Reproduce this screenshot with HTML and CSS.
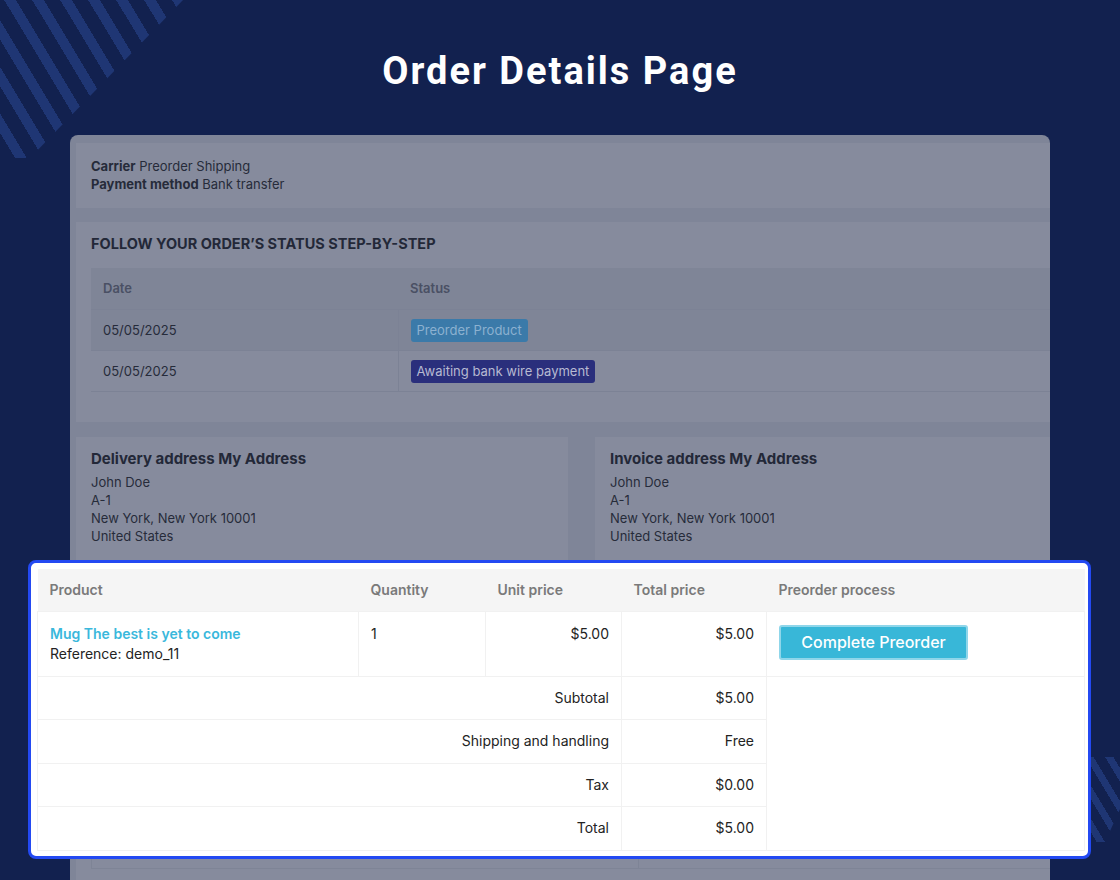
FILE: index.html
```html
<!DOCTYPE html>
<html lang="en">
<head>
<meta charset="utf-8">
<title>Order Details Page</title>
<link rel="stylesheet" href="styles.css">
</head>
<body>
<div class="deco deco-tl"></div>
<div class="deco deco-br"></div>

<h1 class="title">Order Details Page</h1>

<div class="panel">
  <div class="page">
    <section class="card info">
      <div><strong>Carrier</strong> Preorder Shipping</div>
      <div><strong>Payment method</strong> Bank transfer</div>
    </section>

    <section class="card status">
      <h3 class="status-title">FOLLOW YOUR ORDER’S STATUS STEP-BY-STEP</h3>
      <table class="status-table">
        <thead>
          <tr><th class="col-date">Date</th><th>Status</th></tr>
        </thead>
        <tbody>
          <tr class="odd"><td>05/05/2025</td><td><span class="badge badge-preorder">Preorder Product</span></td></tr>
          <tr><td>05/05/2025</td><td><span class="badge badge-wire">Awaiting bank wire payment</span></td></tr>
        </tbody>
      </table>
    </section>

    <div class="addresses">
      <section class="card addr">
        <h4 class="addr-title">Delivery address My Address</h4>
        <div>John Doe</div>
        <div>A-1</div>
        <div>New York, New York 10001</div>
        <div>United States</div>
      </section>
      <section class="card addr">
        <h4 class="addr-title">Invoice address My Address</h4>
        <div>John Doe</div>
        <div>A-1</div>
        <div>New York, New York 10001</div>
        <div>United States</div>
      </section>
    </div>

    <section class="card order-dim">
      <div class="dim-table">
        <div class="dim-cell"></div>
        <div class="dim-cell"></div>
      </div>
    </section>
  </div>
</div>

<div class="callout">
  <table class="order-table">
    <colgroup>
      <col class="c-product"><col class="c-qty"><col class="c-unit"><col class="c-total"><col class="c-pre">
    </colgroup>
    <thead>
      <tr>
        <th>Product</th>
        <th>Quantity</th>
        <th>Unit price</th>
        <th>Total price</th>
        <th>Preorder process</th>
      </tr>
    </thead>
    <tbody>
      <tr class="item">
        <td>
          <a class="prod-link" href="#">Mug The best is yet to come</a>
          <div class="ref">Reference: demo_11</div>
        </td>
        <td>1</td>
        <td class="num">$5.00</td>
        <td class="num">$5.00</td>
        <td class="pre-cell"><button class="btn-preorder" type="button">Complete Preorder</button></td>
      </tr>
      <tr class="sum">
        <td colspan="3" class="num">Subtotal</td>
        <td class="num">$5.00</td>
        <td rowspan="4" class="blank"></td>
      </tr>
      <tr class="sum">
        <td colspan="3" class="num">Shipping and handling</td>
        <td class="num">Free</td>
      </tr>
      <tr class="sum">
        <td colspan="3" class="num">Tax</td>
        <td class="num">$0.00</td>
      </tr>
      <tr class="sum">
        <td colspan="3" class="num">Total</td>
        <td class="num">$5.00</td>
      </tr>
    </tbody>
  </table>
</div>
</body>
</html>
```

FILE: styles.css
```css
* { box-sizing: border-box; }

html, body {
  margin: 0;
  padding: 0;
}

body {
  width: 1120px;
  height: 880px;
  overflow: hidden;
  position: relative;
  background: #12214f;
  font-family: Inter, "Noto Sans", "DejaVu Sans", sans-serif;
}

/* decorative stripes */
.deco {
  position: absolute;
  background: repeating-linear-gradient(59deg, transparent 0 14px, #1f3674 14px 24px);
}
.deco-tl {
  left: 0;
  top: 0;
  width: 190px;
  height: 160px;
  clip-path: polygon(0 0, 183px 0, 30px 158px, 0 158px);
}
.deco-br {
  left: 1088px;
  top: 757px;
  width: 32px;
  height: 90px;
  background: repeating-linear-gradient(59deg, transparent 0 10px, #1f3674 10px 17px);
  clip-path: polygon(0 0, 32px 0, 32px 52px, 17px 85px, 0 85px);
}

.title {
  position: relative;
  margin: 0;
  padding-top: 48px;
  height: 135px;
  text-align: center;
  font-family: Roboto, "Liberation Sans", sans-serif;
  font-weight: 700;
  font-size: 38px;
  line-height: 46px;
  letter-spacing: 2px;
  color: #ffffff;
}

/* dimmed page panel */
.panel {
  position: relative;
  margin-left: 70px;
  width: 980px;
  height: 745px;
  border-radius: 8px 8px 0 0;
  overflow: hidden;
  background: #7f8598;
  color: #262b3a;
  font-size: 13px;
  line-height: 18px;
}

.page {
  width: 1011px;
  padding: 8px 0 0 6px;
  display: flex;
  flex-direction: column;
  gap: 14px;
  box-sizing: content-box;
}

.card {
  background: #868b9d;
}

.info {
  padding: 14px 15px 15px;
}
.info strong { font-weight: 700; }

.status {
  padding: 12px 15px 30px;
}
.status-title {
  margin: 0 0 14px;
  font-size: 14.5px;
  line-height: 20px;
  font-weight: 700;
  color: #232838;
}
.status-table {
  width: 100%;
  border-collapse: collapse;
}
.status-table th {
  height: 41px;
  padding: 0 12px;
  text-align: left;
  font-weight: 600;
  color: #4a5064;
  background: #7f8597;
}
.status-table .col-date { width: 307px; }
.status-table td {
  height: 41px;
  padding: 0 12px;
  border-top: 1px solid #7c8295;
  border-bottom: 1px solid #7c8295;
}
.status-table td + td { border-left: 1px solid #7c8295; }
.status-table tr.odd td { background: #7f8597; }

.badge {
  display: inline-block;
  padding: 3px 6px;
  border-radius: 3px;
  line-height: 17px;
  margin-top: 1px;
}
.badge-preorder { background: #3b7aa9; color: #8cb1d0; }
.badge-wire { background: #2a2f7c; color: #b7bad2; }

.addresses {
  display: flex;
  gap: 27px;
  margin-top: 1px;
}
.addr {
  flex: 1;
  height: 150px;
  padding: 12px 15px;
}
.addr-title {
  margin: 0 0 4px;
  font-size: 15px;
  line-height: 20px;
  font-weight: 700;
  color: #232838;
}

.order-dim {
  height: 300px;
  padding: 15px 15px 0;
}
.dim-table {
  display: grid;
  grid-template-columns: 546px 1fr;
  height: 253px;
  border-bottom: 1px solid #7e8496;
  border-left: 1px solid #7e8496;
}
.dim-cell + .dim-cell { border-left: 1px solid #7e8496; }

/* highlighted callout */
.callout {
  position: absolute;
  left: 28px;
  top: 560px;
  width: 1063px;
  height: 299px;
  padding: 6px 4px 5px 6px;
  border: 3px solid #2349f2;
  border-radius: 8px;
  background: #ffffff;
}

.order-table {
  width: 1047px;
  table-layout: fixed;
  border-collapse: collapse;
  font-size: 14px;
  line-height: 20px;
  color: #232323;
}
.c-product { width: 321px; }
.c-qty { width: 127px; }
.c-unit { width: 136px; }
.c-total { width: 145px; }
.c-pre { width: 318px; }

.order-table th {
  height: 42px;
  padding: 0 12px;
  text-align: left;
  font-weight: 600;
  color: #7a7a7a;
  background: #f5f5f5;
}
.order-table td {
  padding: 0 12px;
  border: 1px solid #f1f1f1;
}
.order-table tr.item td {
  height: 65px;
  vertical-align: top;
  padding-top: 12px;
}
.order-table tr.item td.pre-cell { padding-top: 13px; }
.order-table tr.sum td { height: 43.5px; }
.order-table .num { text-align: right; }
.order-table td.blank { background: #ffffff; }

.prod-link {
  color: #3ab8dc;
  font-weight: 600;
  text-decoration: none;
}
.ref { color: #232323; }

.btn-preorder {
  width: 189px;
  height: 35px;
  padding: 0;
  border: 2px solid #8fd6ea;
  border-radius: 3px;
  background: #38b7d8;
  color: #ffffff;
  font-family: Inter, "Noto Sans", sans-serif;
  font-size: 16px;
  font-weight: 500;
  cursor: pointer;
}
```
